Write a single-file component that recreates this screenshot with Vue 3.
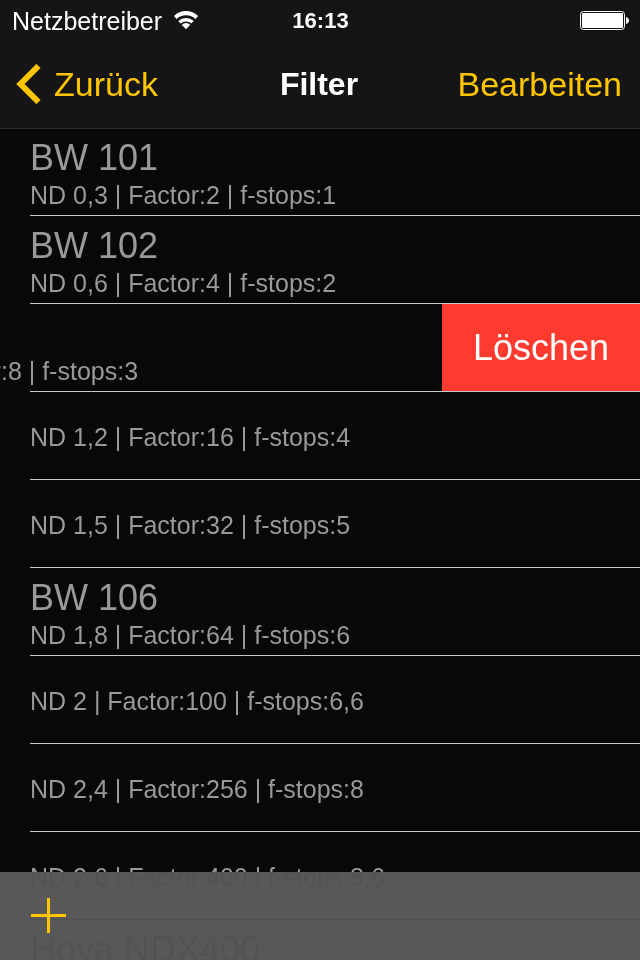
<template>
  <div class="screen">
    <header class="top">
      <div class="status">
        <div class="carrier">
          <span>Netzbetreiber</span>
          <svg class="wifi" viewBox="0 0 24 20" aria-hidden="true">
            <path d="M0 5A17 17 0 0 1 24 5L21.500 7.900A14 14 0 0 0 2.500 7.900Z" />
            <path d="M4.300 9.900A11.400 11.400 0 0 1 19.700 9.900L17.400 12.500A8.400 8.400 0 0 0 6.600 12.500Z" />
            <path d="M7.800 13.700A6.200 6.200 0 0 1 16.200 13.700L12 18.300Z" />
          </svg>
        </div>
        <span class="clock">16:13</span>
        <div class="power">
          <svg class="battery" viewBox="0 0 49 20" aria-hidden="true">
            <rect x="0.5" y="0.5" width="44" height="18" rx="3" fill="none" stroke="#fff" />
            <rect x="2" y="2" width="41" height="15" rx="1" fill="#fff" />
            <path d="M46 6C48 6.5 49 8 49 9.5C49 11 48 12.5 46 13Z" fill="#fff" />
          </svg>
        </div>
      </div>
      <nav class="nav">
        <button class="nav-button back" type="button">
          <svg class="chevron" viewBox="0 0 25 40" aria-hidden="true">
            <path d="M22.500 2L4.500 20L22.500 38" />
          </svg>
          Zurück
        </button>
        <h1>Filter</h1>
        <button class="nav-button edit" type="button">Bearbeiten</button>
      </nav>
    </header>

    <ul class="filters">
      <li v-for="filter in filters" :key="filter.id">
        <div class="row" :class="{ swiped: filter.id === swipedId }">
          <div class="content">
            <span v-if="filter.name" class="name">{{ filter.name }}</span>
            <span class="detail">{{ describe(filter) }}</span>
          </div>
          <button
            v-if="filter.id === swipedId"
            class="delete"
            type="button"
            @click="removeFilter(filter.id)"
          >
            Löschen
          </button>
        </div>
        <div class="divider"></div>
      </li>
    </ul>

    <footer class="toolbar">
      <button class="add" type="button" aria-label="Hinzufügen">
        <svg viewBox="0 0 35 35" aria-hidden="true">
          <path d="M16 0H19V16H35V19H19V35H16V19H0V16H16Z" />
        </svg>
      </button>
    </footer>
  </div>
</template>

<script setup>
import { ref } from 'vue'

const filters = ref([
  { id: 1, name: 'BW 101', nd: '0,3', factor: 2, stops: '1' },
  { id: 2, name: 'BW 102', nd: '0,6', factor: 4, stops: '2' },
  { id: 3, name: 'BW 103', nd: '0,9', factor: 8, stops: '3' },
  { id: 4, name: '', nd: '1,2', factor: 16, stops: '4' },
  { id: 5, name: '', nd: '1,5', factor: 32, stops: '5' },
  { id: 6, name: 'BW 106', nd: '1,8', factor: 64, stops: '6' },
  { id: 7, name: '', nd: '2', factor: 100, stops: '6,6' },
  { id: 8, name: '', nd: '2,4', factor: 256, stops: '8' },
  { id: 9, name: '', nd: '2,6', factor: 400, stops: '8,6' },
  { id: 10, name: 'Hoya NDX400', nd: '2,7', factor: 500, stops: '9' }
])

const swipedId = ref(3)

function describe(filter) {
  return `ND ${filter.nd} | Factor:${filter.factor} | f-stops:${filter.stops}`
}

function removeFilter(id) {
  filters.value = filters.value.filter((f) => f.id !== id)
  swipedId.value = null
}
</script>

<style>
body {
  margin: 0;
  background: #080808;
}
</style>

<style scoped>
.screen {
  display: flex;
  flex-direction: column;
  height: 100vh;
  overflow: hidden;
  background: #080808;
  color: #999;
  font-family: 'Liberation Sans', Arial, sans-serif;
}

button {
  padding: 0;
  border: 0;
  background: none;
  font: inherit;
  cursor: pointer;
}

svg {
  display: block;
}

.top {
  flex: none;
  background: #151515;
  color: #fff;
  box-shadow: 0 1px #2b2b2b;
  z-index: 1;
}

.status {
  display: grid;
  grid-template-columns: 1fr auto 1fr;
  align-items: center;
  height: 40px;
  box-sizing: border-box;
  padding: 2px 11px 0 12px;
  font-size: 25px;
}

.carrier {
  display: flex;
  align-items: center;
  gap: 12px;
}

.wifi {
  width: 24px;
  height: 20px;
  fill: #fff;
}

.clock {
  font-size: 22px;
  font-weight: bold;
}

.power {
  display: flex;
  justify-content: flex-end;
}

.battery {
  width: 49px;
  height: 20px;
}

.nav {
  display: grid;
  grid-template-columns: 1fr auto 1fr;
  align-items: center;
  height: 88px;
  padding: 0 18px 0 16px;
  font-size: 34px;
}

h1 {
  margin: 0;
  font-size: 32px;
}

.nav-button {
  color: #ffc600;
}

.back {
  display: flex;
  align-items: center;
  justify-self: start;
  gap: 13px;
}

.chevron {
  width: 25px;
  height: 40px;
  fill: none;
  stroke: #ffc600;
  stroke-width: 6;
}

.edit {
  justify-self: end;
}

.filters {
  flex: 1;
  min-height: 0;
  margin: 0;
  padding: 0;
  list-style: none;
}

.row {
  display: flex;
  height: 87px;
  overflow: hidden;
}

.row.swiped {
  justify-content: flex-end;
}

.content {
  display: flex;
  flex: 0 0 100%;
  flex-direction: column;
  justify-content: center;
  box-sizing: border-box;
  padding: 2px 30px 0;
  white-space: nowrap;
}

.name {
  font-size: 36px;
  line-height: 44px;
}

.detail {
  font-size: 25px;
  line-height: 30px;
}

.delete {
  flex: none;
  padding: 0 31px;
  background: #ff3b30;
  color: #fff;
  font-size: 36px;
}

.divider {
  height: 1px;
  margin-left: 30px;
  background: #c8c7cc;
}

.toolbar {
  position: fixed;
  right: 0;
  bottom: 0;
  left: 0;
  display: flex;
  align-items: center;
  height: 88px;
  padding: 0 31px 2px;
  box-sizing: border-box;
  background: rgba(83, 83, 83, 0.97);
  backdrop-filter: invert(1);
}

.add svg {
  width: 35px;
  height: 35px;
  fill: #ffc600;
}
</style>
